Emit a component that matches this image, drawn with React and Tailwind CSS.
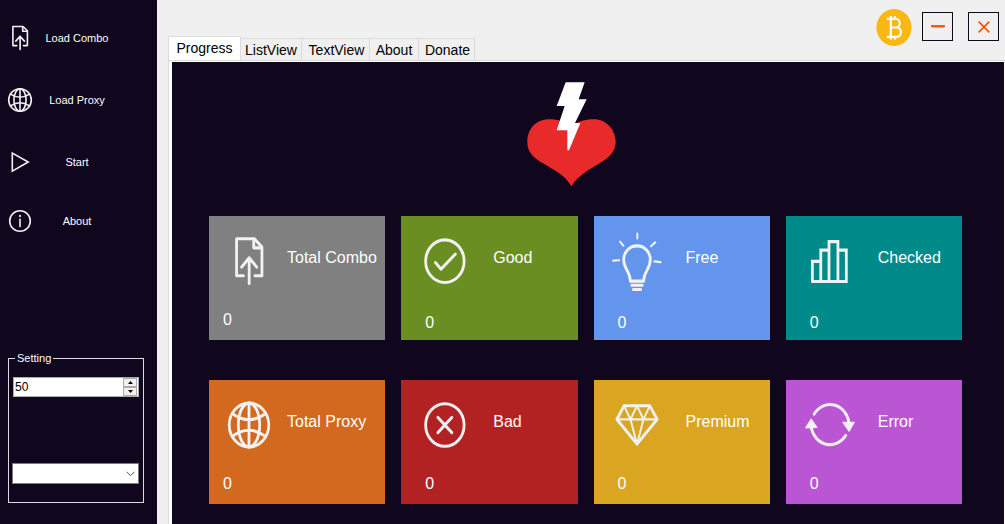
import React from 'react';

function Icon({ className, children }) {
  return (
    <svg
      className={className}
      viewBox="0 0 32 32"
      preserveAspectRatio="none"
      fill="none"
      stroke="#f2f2f2"
      strokeWidth="1.6"
      strokeLinecap="round"
      strokeLinejoin="round"
      aria-hidden="true"
    >
      {children}
    </svg>
  );
}

const fileUp = (
  <>
    <path d="M12.8 23.6H8.9V4.5H19L23.4 8.8V23.6H19.4" />
    <path d="M18.7 4.8V9.2H23" />
    <path d="M16.1 27.6V14.4M11.8 19.1L16.1 14.4L20.4 19.1" />
  </>
);

const globe = (
  <>
    <circle cx="16" cy="16" r="11.3" />
    <ellipse cx="16" cy="16" rx="6.1" ry="11.3" />
    <path d="M16 4.7V27.3M6.6 10.2Q16 16.4 25.4 10.2M6.6 21.8Q16 15.6 25.4 21.8" />
  </>
);

const play = <path d="M8.3 7V25.2L24.2 16Z" strokeLinejoin="miter" />;

const info = (
  <>
    <circle cx="16" cy="16" r="10.3" />
    <path d="M16 14.4V21.4" />
    <path d="M16 10.6V11.2" strokeWidth="1.9" />
  </>
);

const check = (
  <>
    <circle cx="16.5" cy="16.1" r="11" />
    <path d="M11.1 16.8L14.3 20.2L22.5 12.4" />
  </>
);

const cross = (
  <>
    <circle cx="16.5" cy="16" r="11" />
    <path d="M12.5 12.1L20.5 19.9M20.5 12.1L12.5 19.9" />
  </>
);

const bulb = (
  <>
    <path
      d="M12.2 26.4C12.2 21.4 8.4 20.2 8.4 15.3C8.4 11.2 11.8 8.2 16 8.2S23.6 11.2 23.6 15.3C23.6 20.2 19.8 21.4 19.8 26.4Z"
    />
    <path d="M13 28.5H19M13.9 30.7H18.1" />
    <path
      d="M16.2 1.9V4.4M6.3 6L8.2 8.1M26.4 6.4L24 8.4M2.4 15.8L5.8 15.6M25.9 16.2L29.4 16.6"
      strokeWidth="1.1"
    />
  </>
);

const bars = (
  <path
    d="M6.5 26.6V16.2H11.3V26.6M11.3 16.2V10.4H16V26.6M16 10.4V6H21.1V26.6M21.1 10.4H25.9V26.6H6.5"
    strokeWidth="1.6"
    strokeLinejoin="miter"
  />
);

const diamond = (
  <>
    <path d="M8.6 6.1H23.3L27.5 13.1L16 25.8L4.5 13.1Z" />
    <path
      d="M4.5 13.1H27.5M8.6 6.1L12.3 13.1L16 6.1L19.7 13.1L23.3 6.1M12.3 13.1L16 26L19.7 13.1"
      strokeWidth="1.1"
    />
  </>
);

const refresh = (
  <>
    <path d="M7.5 10.4A11 11.2 0 0 1 27.5 15" />
    <path d="M25.6 21.4A11 11.2 0 0 1 5.8 17" />
    <path d="M23.9 14.6H30.5L27.5 19.2ZM2.7 17.5L9.1 17.2L5.8 13Z" fill="#f2f2f2" strokeWidth="0.6" />
  </>
);

const menu = [
  { label: 'Load Combo', icon: fileUp, height: 'h-[62px]' },
  { label: 'Load Proxy', icon: globe, height: 'h-[62px]' },
  { label: 'Start', icon: play, height: 'h-[62px]' },
  { label: 'About', icon: info, height: 'h-14' },
];

const narrow = 'pl-3 gap-[10px]';
const wide = 'pl-[15px] gap-[21px]';

const tiles = [
  { label: 'Total Combo', icon: fileUp, color: 'bg-[#808080]', row: narrow, value: 'ml-[14px] mt-[18px]' },
  { label: 'Good', icon: check, color: 'bg-[#6b8e23]', row: wide, value: 'ml-6 mt-[21px]' },
  { label: 'Free', icon: bulb, color: 'bg-[#6495ed]', row: wide, value: 'ml-6 mt-[21px]' },
  { label: 'Checked', icon: bars, color: 'bg-[#008b8b]', row: wide, value: 'ml-6 mt-[21px]' },
  { label: 'Total Proxy', icon: globe, color: 'bg-[#d2691e]', row: narrow, value: 'ml-[14px] mt-[18px]' },
  { label: 'Bad', icon: cross, color: 'bg-[#b22222]', row: wide, value: 'ml-6 mt-[18px]' },
  { label: 'Premium', icon: diamond, color: 'bg-[#daa520]', row: wide, value: 'ml-6 mt-[18px]' },
  { label: 'Error', icon: refresh, color: 'bg-[#ba55d3]', row: wide, value: 'ml-6 mt-[18px]' },
];

const tabs = [
  { label: 'ListView', width: 'w-[61px]' },
  { label: 'TextView', width: 'w-[68px] pl-[2px]' },
  { label: 'About', width: 'w-[49px]' },
  { label: 'Donate', width: 'w-[56px] pl-[2px]' },
];

function Sidebar() {
  return (
    <aside className="flex flex-col w-[157px] shrink-0 bg-[#10061e] pt-[7px] pb-[21px] text-white text-[11px] leading-4">
      <nav className="flex flex-col">
        {menu.map((item) => (
          <button key={item.label} type="button" className={`flex items-center pl-1 pr-[39px] ${item.height}`}>
            <Icon className="w-8 h-8 shrink-0">{item.icon}</Icon>
            <span className="flex-1 text-center whitespace-nowrap">{item.label}</span>
          </button>
        ))}
      </nav>

      <fieldset className="min-w-0 mt-auto ml-2 mr-[13px] border border-[#dcdcdc] pl-[3px] pr-1 pb-[18px]">
        <legend className="ml-[3px] px-[2px]">Setting</legend>
        <div className="flex h-5 mt-[11px] ml-px bg-white border border-[#ababab]">
          <input
            type="text"
            inputMode="numeric"
            aria-label="Threads"
            defaultValue="50"
            className="flex-1 w-0 min-w-0 px-px text-xs leading-4 text-black outline-none"
          />
          <div className="flex flex-col w-[15px] shrink-0 pr-px">
            <button type="button" aria-label="Increase" className="flex flex-1 items-center justify-center bg-[#f0f0f0] border border-[#ababab]">
              <svg width="5" height="3" viewBox="0 0 5 3"><path d="M0 3L2.5 0L5 3Z" fill="#000" /></svg>
            </button>
            <button type="button" aria-label="Decrease" className="flex flex-1 items-center justify-center bg-[#f0f0f0] border border-[#ababab]">
              <svg width="5" height="3" viewBox="0 0 5 3"><path d="M0 0L2.5 3L5 0Z" fill="#000" /></svg>
            </button>
          </div>
        </div>
        <div className="grid mt-[66px]">
          <select aria-label="Proxy type" className="col-start-1 row-start-1 h-[21px] w-full appearance-none bg-white border border-[#7a7a7a] text-xs text-black">
            <option></option>
          </select>
          <svg className="col-start-1 row-start-1 self-center justify-self-end mr-1 pointer-events-none" width="9" height="6" viewBox="0 0 9 6" fill="none" stroke="#505050">
            <path d="M0.5 0.7L4.5 4.7L8.5 0.7" />
          </svg>
        </div>
      </fieldset>
    </aside>
  );
}

function WindowControls() {
  return (
    <div className="flex items-start pt-[9px] pr-[6px]">
      <svg className="mr-[10px]" width="36" height="37" viewBox="0 0 36 37" fill="none" stroke="#fff" strokeWidth="2.2">
        <ellipse cx="18" cy="18.5" rx="17.6" ry="18.4" fill="#fbb813" stroke="none" />
        <path d="M10.8 9.9H20A3.8 4.3 0 0 1 20 18.5H14.8M20 18.5H20.6A4.4 4.7 0 0 1 20.6 27.9H10.8M14.8 9.9V27.9" />
        <path d="M14.8 7V9.8M18.8 7V9.8M14.8 27.8V30.4M18.8 27.8V30.4" />
      </svg>
      <button type="button" aria-label="Minimize" className="flex items-center justify-center w-[31px] h-[29px] mt-[3px] mr-[15px] border border-[#10061e]">
        <svg width="14" height="3" viewBox="0 0 14 3"><rect width="14" height="2.4" rx="0.8" fill="#fc5412" /></svg>
      </button>
      <button type="button" aria-label="Close" className="flex items-center justify-center w-[31px] h-[29px] mt-[3px] border border-[#10061e]">
        <svg width="12" height="12" viewBox="0 0 12 12" fill="none" stroke="#fc5412" strokeWidth="1.8" strokeLinecap="round">
          <path d="M1.2 1.2L10.8 10.8M10.8 1.2L1.2 10.8" />
        </svg>
      </button>
    </div>
  );
}

function Tile({ tile }) {
  return (
    <section className={`h-[124px] pt-[14px] ${tile.color}`}>
      <div className={`flex items-start ${tile.row}`}>
        <Icon className="w-14 h-[62px] shrink-0">{tile.icon}</Icon>
        <h2 className="mt-4 leading-6 whitespace-nowrap">{tile.label}</h2>
      </div>
      <p className={`leading-5 ${tile.value}`}>0</p>
    </section>
  );
}

function App() {
  return (
    <div className="flex min-h-screen bg-[#f0f0f0] font-['Liberation_Sans',Arial,sans-serif]">
      <Sidebar />
      <main className="flex flex-col flex-1 min-w-0 pl-[11px]">
        <div className="flex justify-between h-[60px]">
          <div role="tablist" className="flex items-end text-sm text-black">
            <button type="button" role="tab" aria-selected="true" className="w-[73px] h-6 pb-px bg-white border border-b-0 border-[#dcdcdc]">
              Progress
            </button>
            {tabs.map((tab) => (
              <button key={tab.label} type="button" role="tab" aria-selected="false" className={`h-[22px] border-t border-r border-[#dcdcdc] ${tab.width}`}>
                {tab.label}
              </button>
            ))}
          </div>
          <WindowControls />
        </div>

        <div className="flex-1 flex flex-col bg-white border-l border-t border-[#dcdcdc] pl-[3px] pt-px pr-px">
          <div className="flex-1 bg-[#10061e] pt-5 pl-[37px] pr-[42px] text-white">
            <div className="flex justify-center pr-7">
              <svg width="89" height="105" viewBox="52 35 267 315" role="img" aria-label="Logo">
                <path
                  d="M185 348C170 322 150 308 115 288C75 265 53 250 53 215C53 175 80 147 118 147C145 147 170 155 186 170C200 155 225 147 252 147C290 147 318 178 318 215C318 250 290 268 255 288C220 308 200 325 185 348Z"
                  fill="#e82a2a"
                />
                <path d="M168 36H225L207 87H231L196 158H212L178 240H173V180H141L165 107H141Z" fill="#fff" />
              </svg>
            </div>
            <div className="grid grid-cols-4 gap-x-4 gap-y-10 mt-[29px]">
              {tiles.map((tile) => (
                <Tile key={tile.label} tile={tile} />
              ))}
            </div>
          </div>
        </div>
      </main>
    </div>
  );
}

export default App;
